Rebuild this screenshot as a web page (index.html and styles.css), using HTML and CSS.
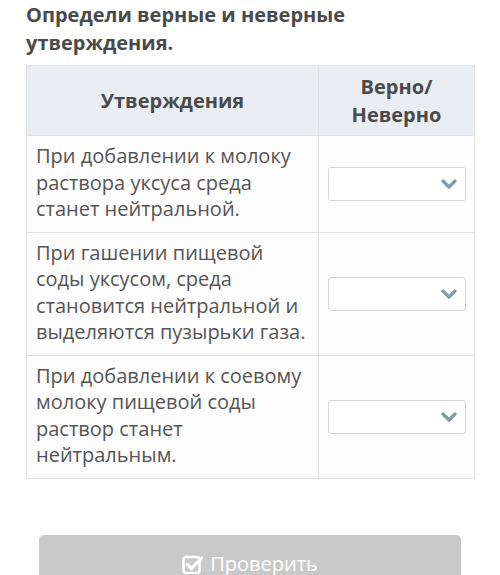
FILE: index.html
```html
<!DOCTYPE html>
<html lang="ru">
<head>
<meta charset="utf-8">
<link rel="stylesheet" href="styles.css">
</head>
<body>
<div class="page">
  <h1 class="title">Определи верные и неверные утверждения.</h1>
  <table class="quiz">
    <thead>
      <tr>
        <th class="col-text">Утверждения</th>
        <th class="col-sel">Верно/<br>Неверно</th>
      </tr>
    </thead>
    <tbody>
      <tr class="r1">
        <td class="col-text">При добавлении к молоку раствора уксуса среда станет нейтральной.</td>
        <td class="col-sel"><div class="select"><svg class="chev" viewBox="0 0 16 10" width="16" height="10"><path d="M2 2 L8 8 L14 2" fill="none" stroke="#7f9ea3" stroke-width="3.2" stroke-linecap="round" stroke-linejoin="round"/></svg></div></td>
      </tr>
      <tr class="r2">
        <td class="col-text">При гашении пищевой соды уксусом, среда становится нейтральной и выделяются пузырьки газа.</td>
        <td class="col-sel"><div class="select"><svg class="chev" viewBox="0 0 16 10" width="16" height="10"><path d="M2 2 L8 8 L14 2" fill="none" stroke="#7f9ea3" stroke-width="3.2" stroke-linecap="round" stroke-linejoin="round"/></svg></div></td>
      </tr>
      <tr class="r3">
        <td class="col-text">При добавлении к соевому молоку пищевой соды раствор станет нейтральным.</td>
        <td class="col-sel"><div class="select"><svg class="chev" viewBox="0 0 16 10" width="16" height="10"><path d="M2 2 L8 8 L14 2" fill="none" stroke="#7f9ea3" stroke-width="3.2" stroke-linecap="round" stroke-linejoin="round"/></svg></div></td>
      </tr>
    </tbody>
  </table>
  <div class="actions">
    <button class="check-btn" type="button"><svg class="chk" viewBox="0 0 22 19" width="22" height="19"><rect x="1.5" y="2" width="16" height="16" rx="2.5" fill="none" stroke="#fff" stroke-width="2.6"/><path d="M5.5 9.5 L9.5 13.5 L19.5 3" fill="none" stroke="#fff" stroke-width="3.2" stroke-linecap="round" stroke-linejoin="round"/></svg><span>Проверить</span></button>
  </div>
</div>
</body>
</html>
```

FILE: styles.css
```css
html, body {
  margin: 0;
  padding: 0;
  background: #ffffff;
}
body {
  font-family: "Open Sans", "Noto Sans", sans-serif;
  color: #555555;
  width: 500px;
  height: 575px;
  overflow: hidden;
}
.page {
  padding: 0 26px;
}
.title {
  margin: 0;
  padding-top: 1px;
  font-size: 20px;
  font-weight: 700;
  line-height: 28px;
  color: #4a4a4a;
  width: 380px;
}
.quiz {
  margin-top: 8px;
  width: 449px;
  border-collapse: collapse;
  table-layout: fixed;
  background: #fdfdfd;
}
.quiz th, .quiz td {
  border: 1px solid #e3e3e3;
  vertical-align: middle;
}
.quiz th {
  background: #eaeef2;
  color: #4a4a4a;
  font-size: 20px;
  font-weight: 700;
  line-height: 28px;
  height: 68px;
  padding: 0;
}
.quiz .col-text {
  width: 291px;
}
.quiz td.col-text {
  font-size: 20px;
  line-height: 26.5px;
  padding: 7px 10px 9px 9px;
  text-align: left;
}
.quiz th.col-sel {
  padding-top: 1px;
}
.quiz td.col-sel {
  padding: 0 8px 0 9px;
}
.select {
  height: 32px;
  border: 1px solid #d6d6d6;
  border-radius: 3px;
  background: #ffffff;
  display: flex;
  align-items: center;
  justify-content: flex-end;
  padding-right: 8px;
}
.chev {
  display: block;
}
.r1 td.col-sel .select { margin-top: 1px; }
.actions {
  padding: 56px 13px 0 13px;
}
.check-btn {
  width: 422px;
  height: 60px;
  border: none;
  border-radius: 5px;
  background: #c9c9c9;
  color: #ffffff;
  font-family: "Open Sans", "Noto Sans", sans-serif;
  font-size: 20px;
  display: flex;
  align-items: flex-start;
  justify-content: center;
  gap: 6px;
  padding-top: 16px;
}
.check-btn span {
  line-height: 26px;
}
.chk {
  margin-top: 4px;
}
```
